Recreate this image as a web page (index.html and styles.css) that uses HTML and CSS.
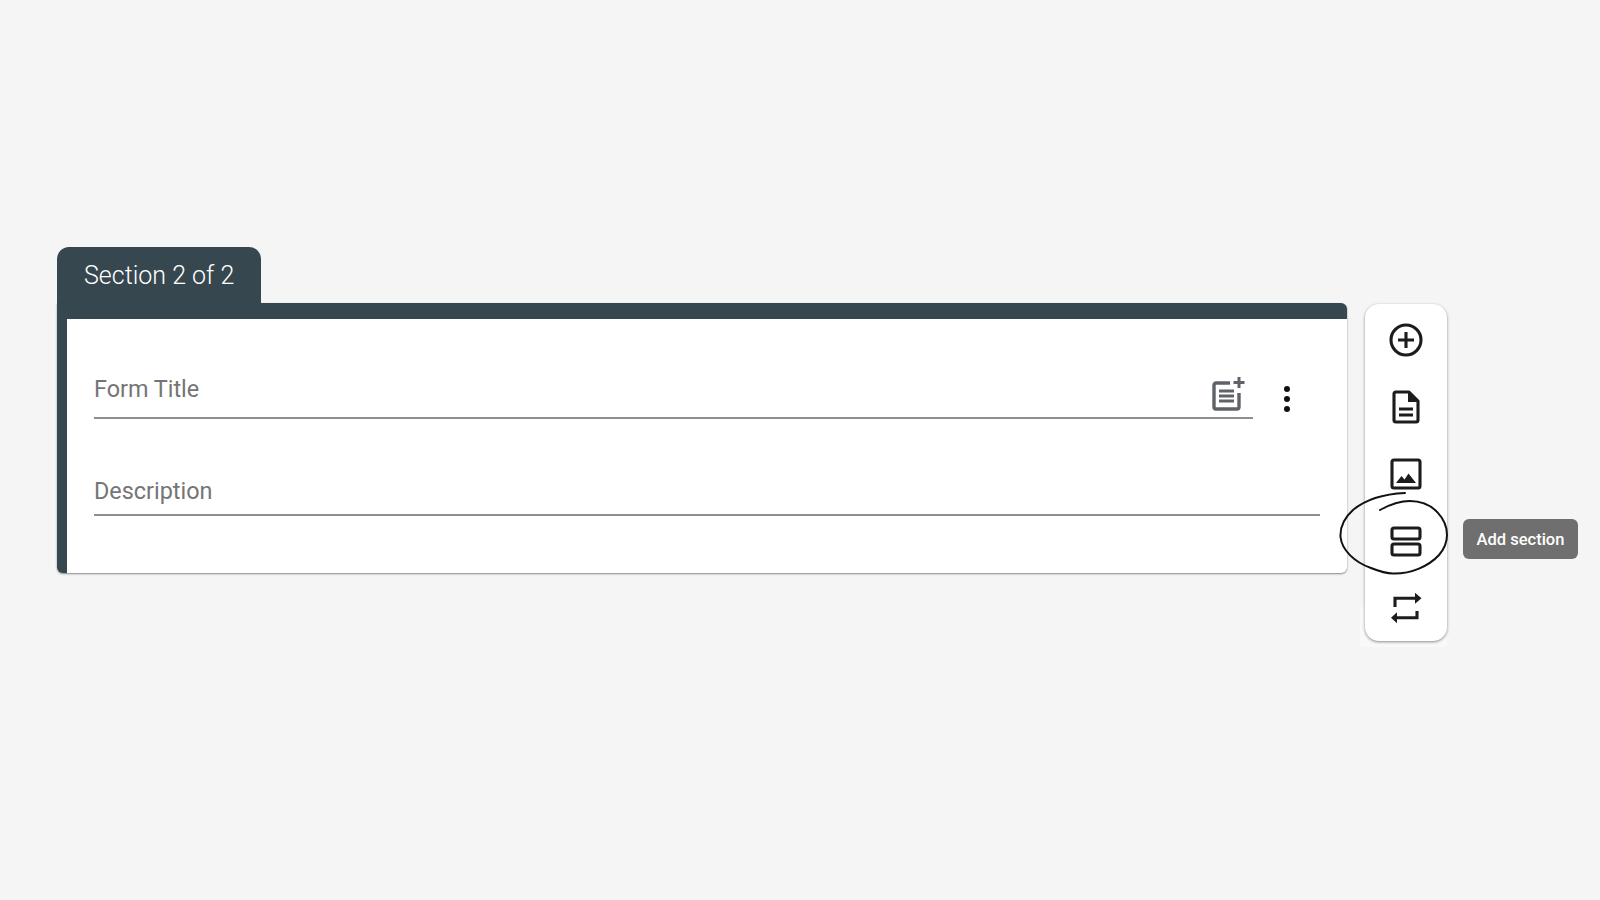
FILE: index.html
```html
<!DOCTYPE html>
<html lang="en">
<head>
    <meta charset="UTF-8">
    <title>Add section</title>
    <link rel="stylesheet" href="styles.css">
</head>
<body>
    <div class="page">
        <div class="section">
            <div class="section-tab">Section 2 of 2</div>
            <div class="card">
                <div class="title-row">
                    <div class="field title-field">
                        <span class="placeholder">Form Title</span>
                        <svg class="note-icon" width="36" height="36" viewBox="0 0 36 36">
                            <path d="M21 7H7a2 2 0 0 0-2 2v22a2 2 0 0 0 2 2h21a2 2 0 0 0 2-2V17" fill="none" stroke="#5f6368" stroke-width="3.400"/>
                            <path d="M10 15h15M10 20h15M10 25h15" stroke="#5f6368" stroke-width="3"/>
                            <path d="M30 1v11M24.500 6.500h11" stroke="#5f6368" stroke-width="3"/>
                        </svg>
                    </div>
                    <svg class="more-icon" width="8" height="30" viewBox="0 0 8 30">
                        <circle cx="4" cy="5" r="3"/>
                        <circle cx="4" cy="15" r="3"/>
                        <circle cx="4" cy="25" r="3"/>
                    </svg>
                </div>
                <div class="field desc-field">
                    <span class="placeholder">Description</span>
                </div>
            </div>
        </div>
        <div class="toolbar">
            <svg class="tool" width="36" height="36" viewBox="0 0 36 36">
                <circle cx="18" cy="18" r="15" fill="none" stroke="#1c1c1c" stroke-width="3.100"/>
                <path d="M18 10v16M10 18h16" stroke="#1c1c1c" stroke-width="3.100"/>
            </svg>
            <svg class="tool" width="36" height="36" viewBox="0 0 36 36">
                <path d="M8 3h13l9 9v19a2 2 0 0 1-2 2H8a2 2 0 0 1-2-2V5a2 2 0 0 1 2-2z" fill="none" stroke="#1c1c1c" stroke-width="3.100" stroke-linejoin="round"/>
                <path d="M20 3l10 10h-10z" fill="#1c1c1c"/>
                <path d="M11 20h14M11 26h14" stroke="#1c1c1c" stroke-width="3"/>
            </svg>
            <svg class="tool" width="36" height="36" viewBox="0 0 36 36">
                <rect x="4" y="4" width="28" height="28" rx="2" fill="none" stroke="#1c1c1c" stroke-width="3.100"/>
                <path d="M8 27l5.500-7 3 3.500 4-6 7.500 9.500z" fill="#1c1c1c"/>
            </svg>
            <svg class="tool" width="36" height="36" viewBox="0 0 36 36">
                <rect x="4" y="5" width="28" height="11" rx="2" fill="none" stroke="#1c1c1c" stroke-width="3.100"/>
                <rect x="4" y="21" width="28" height="11" rx="2" fill="none" stroke="#1c1c1c" stroke-width="3.100"/>
            </svg>
            <svg class="tool" width="36" height="36" viewBox="0 -1 36 36">
                <path d="M7 16V7.300h21M29 20v6.700H8" fill="none" stroke="#1c1c1c" stroke-width="3.100"/>
                <path d="M27 1.800l6.500 5.500-6.500 5.500zM9 21.200l-6 5.500 6 5.500z" fill="#1c1c1c"/>
            </svg>
            <div class="tooltip">Add section</div>
            <svg class="scribble" width="112" height="88" viewBox="0 0 112 88">
                <path d="M66 3C45 4 26 10 14 20C5 28 1 38 1.500 47C3 60 15 72 32 78C42 82 48 83.500 54 83.500C72 84 90 76 100 65C106 58 108 52 108 45C108 30 95 11 71 11C60 11 50 15 41 20" fill="none" stroke="#111" stroke-width="2" stroke-linecap="round"/>
            </svg>
        </div>
    </div>
</body>
</html>
```

FILE: styles.css
```css
body {
    margin: 0;
    background-color: #f5f5f5;
    font-family: Roboto, "Liberation Sans", sans-serif;
}
.page {
    display: flex;
    align-items: flex-start;
    height: 900px;
    box-sizing: border-box;
    padding: 247px 0 0 57px;
}
.section {
    width: 1290px;
}
.section-tab {
    width: 204px;
    height: 56px;
    box-sizing: border-box;
    padding: 14px 0 0 27px;
    background-color: #37474f;
    border-radius: 12px 12px 0 0;
    color: #fff;
    font-size: 25px;
    font-weight: 300;
    line-height: 30px;
}
.card {
    height: 270px;
    box-sizing: border-box;
    padding: 0 27px;
    background-color: #fff;
    border-top: 16px solid #37474f;
    border-left: 10px solid #37474f;
    border-radius: 0 6px 6px 6px;
    box-shadow: 0 1px 2px rgba(0, 0, 0, 0.45);
}
.title-row {
    display: flex;
    align-items: flex-start;
    padding-top: 47px;
}
.field {
    display: flex;
    align-items: flex-end;
    justify-content: space-between;
    box-sizing: border-box;
    border-bottom: 2px solid #8f8f8f;
}
.title-field {
    width: 1159px;
    height: 53px;
    padding-right: 8px;
}
.desc-field {
    height: 50px;
    margin-top: 47px;
}
.placeholder {
    padding-bottom: 13px;
    color: #757575;
    font-size: 23.400px;
    line-height: 30px;
}
.desc-field .placeholder {
    padding-bottom: 8px;
}
.note-icon {
    margin-bottom: 5px;
}
.more-icon {
    margin: 18px 0 0 30px;
    fill: #111;
}
.toolbar {
    position: relative;
    display: flex;
    flex-direction: column;
    align-items: center;
    gap: 31px;
    width: 82px;
    height: 337px;
    box-sizing: border-box;
    margin: 57px 0 0 18px;
    padding-top: 18px;
    background-color: #fff;
    border-radius: 14px;
    box-shadow: 0 1px 3px rgba(0, 0, 0, 0.45);
}
/* lighter patch left under the bottom of the toolbar */
.toolbar::before {
    content: "";
    position: absolute;
    left: -5px;
    right: 0;
    bottom: -6px;
    height: 40px;
    background-color: #f9f9f9;
    z-index: -1;
}
.tool {
    flex: none;
}
.tooltip {
    position: absolute;
    left: 98px;
    top: 215px;
    width: 115px;
    height: 40px;
    background-color: #6f6f6f;
    border-radius: 6px;
    color: #fff;
    font-size: 16.500px;
    font-weight: 500;
    line-height: 41px;
    text-align: center;
}
.scribble {
    position: absolute;
    left: -26px;
    top: 186px;
}
```
